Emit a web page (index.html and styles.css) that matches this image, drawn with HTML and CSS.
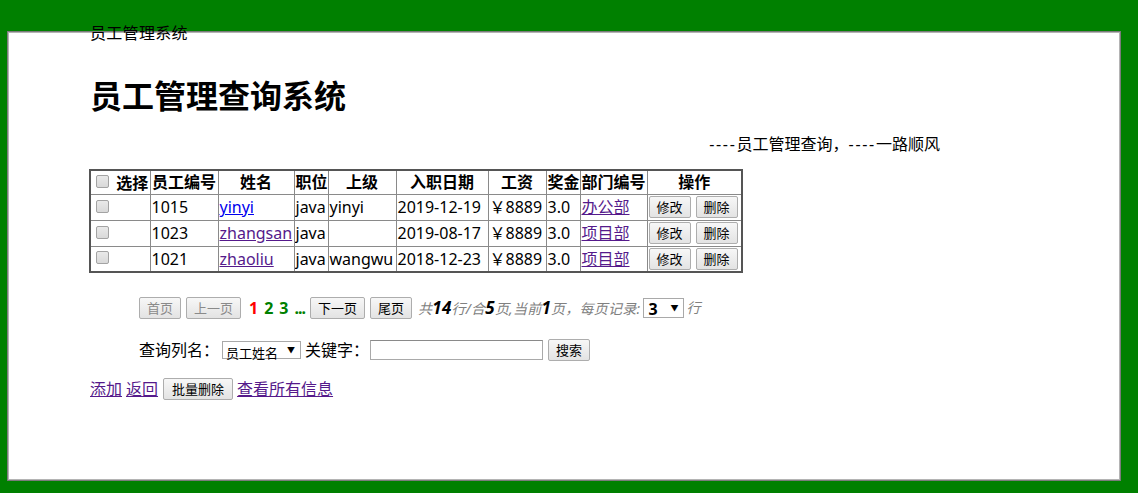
FILE: index.html
```html
<!DOCTYPE html>
<html lang="zh">
<head>
<meta charset="utf-8">
<title>员工管理系统</title>
<link rel="stylesheet" href="styles.css">
</head>
<body>
<div class="frame">
  <div class="frame-label">员工管理系统</div>
  <div class="content">
    <h1 class="title">员工管理查询系统</h1>
    <div class="subtitle"><span class="dash">----</span>员工管理查询，<span class="dash">----</span>一路顺风</div>
    <table class="grid">
      <colgroup>
        <col class="w60"><col class="w68"><col class="w76"><col class="w34"><col class="w68">
        <col class="w92"><col class="w58"><col class="w34"><col class="w67"><col class="w95">
      </colgroup>
      <thead>
        <tr>
          <th><input type="checkbox" class="cb"> 选择</th>
          <th>员工编号</th>
          <th>姓名</th>
          <th>职位</th>
          <th>上级</th>
          <th>入职日期</th>
          <th>工资</th>
          <th>奖金</th>
          <th>部门编号</th>
          <th>操作</th>
        </tr>
      </thead>
      <tbody>
        <tr>
          <td><input type="checkbox" class="cb"></td>
          <td>1015</td>
          <td><a href="#" class="link-new">yinyi</a></td>
          <td>java</td>
          <td>yinyi</td>
          <td>2019-12-19</td>
          <td>￥8889</td>
          <td>3.0</td>
          <td><a href="#" class="link">办公部</a></td>
          <td><span class="ops"><button class="btn">修改</button><button class="btn">删除</button></span></td>
        </tr>
        <tr>
          <td><input type="checkbox" class="cb"></td>
          <td>1023</td>
          <td><a href="#" class="link">zhangsan</a></td>
          <td>java</td>
          <td></td>
          <td>2019-08-17</td>
          <td>￥8889</td>
          <td>3.0</td>
          <td><a href="#" class="link">项目部</a></td>
          <td><span class="ops"><button class="btn">修改</button><button class="btn">删除</button></span></td>
        </tr>
        <tr>
          <td><input type="checkbox" class="cb"></td>
          <td>1021</td>
          <td><a href="#" class="link">zhaoliu</a></td>
          <td>java</td>
          <td>wangwu</td>
          <td>2018-12-23</td>
          <td>￥8889</td>
          <td>3.0</td>
          <td><a href="#" class="link">项目部</a></td>
          <td><span class="ops"><button class="btn">修改</button><button class="btn">删除</button></span></td>
        </tr>
      </tbody>
    </table>

    <div class="pager">
      <button class="btn" disabled>首页</button>
      <button class="btn" disabled>上一页</button>
      <span class="pnum current">1</span>
      <span class="pnum">2</span>
      <span class="pnum">3</span>
      <span class="pnum dots">...</span>
      <button class="btn">下一页</button>
      <button class="btn">尾页</button>
      <span class="pinfo">共<b>14</b>行/合<b>5</b>页,当前<b>1</b>页，每页记录:</span>
      <span class="sel sel-size"><select><option>3</option><option>5</option><option>10</option></select></span>
      <span class="pinfo unit">行</span>
    </div>

    <div class="query">
      <span>查询列名：</span>
      <span class="sel sel-col"><select><option>员工姓名</option><option>员工编号</option></select></span>
      <span class="kw">关键字：</span>
      <input type="text" class="kw-input">
      <button class="btn">搜索</button>
    </div>

    <div class="actions">
      <a href="#" class="link">添加</a>
      <a href="#" class="link">返回</a>
      <button class="btn btn-wide">批量删除</button>
      <a href="#" class="link">查看所有信息</a>
    </div>
  </div>
</div>
</body>
</html>
```

FILE: styles.css
```css
* { box-sizing: border-box; }

html, body { height: 100%; }

body {
  margin: 0;
  padding: 31px 17px 12px 7px;
  background: #008000;
  font-family: "Noto Sans", "Noto Sans CJK SC", sans-serif;
  font-size: 16px;
  line-height: 20px;
  color: #000;
}

.frame {
  position: relative;
  height: 450px;
  background: #fff;
  border: 1px solid #7b7b7b;
  box-shadow: inset 0 0 0 1px #b4b4b4;
}

.frame-label {
  position: absolute;
  top: -9px;
  left: 82px;
  font-size: 16px;
  line-height: 20px;
  letter-spacing: 0.3px;
  white-space: nowrap;
}

.content {
  padding: 42px 0 0 81px;
  width: 932px;
}

.title {
  margin: 0 0 0 1px;
  font-size: 32px;
  line-height: 40px;
  font-weight: bold;
  font-family: "Noto Sans CJK SC", sans-serif;
}

.subtitle {
  margin-top: 20px;
  text-align: right;
  line-height: 20px;
}

.dash { letter-spacing: 1.7px; }

.grid {
  margin-top: 15px;
  border-collapse: collapse;
  table-layout: fixed;
  width: 652px;
  border: 2px solid #555;
  font-size: 16px;
  line-height: 20px;
}

.w60 { width: 60px; }
.w68 { width: 68px; }
.w76 { width: 76px; }
.w34 { width: 34px; }
.w92 { width: 92px; }
.w58 { width: 58px; }
.w67 { width: 67px; }
.w95 { width: 95px; }

.grid th, .grid td {
  border: 1px solid #8a8a8a;
  padding: 0 1px;
  white-space: nowrap;
  overflow: hidden;
  vertical-align: middle;
}

.grid th {
  height: 24px;
  font-weight: bold;
  text-align: center;
}

.grid td {
  height: 26px;
  text-align: left;
}

.cb {
  -webkit-appearance: none;
  appearance: none;
  width: 13px;
  height: 13px;
  margin: 3px 3px 3px 4px;
  vertical-align: -2px;
  border: 1px solid #a3a3a3;
  border-radius: 2px;
  background: linear-gradient(#e9e9e9, #d9d9d9);
}

.link { color: #551a8b; text-decoration: underline; }
.link-new { color: #0000ee; text-decoration: underline; }

.ops {
  display: flex;
  gap: 5px;
}

.btn {
  font-family: "Noto Sans CJK SC", sans-serif;
  font-size: 13px;
  line-height: 18px;
  height: 22px;
  padding: 1px 7px;
  margin: 0;
  border: 1px solid #adadad;
  border-radius: 2px;
  background: linear-gradient(#f7f7f7, #e3e3e3);
  color: #000;
}

.btn:disabled { color: #8a8a8a; }

.btn-wide { padding: 1px 8px; }

.pager {
  display: flex;
  align-items: center;
  margin-top: 23px;
  padding-left: 50px;
  height: 24px;
}

.pager .btn + .btn { margin-left: 5px; }

.pnum {
  font-weight: bold;
  font-size: 16px;
  color: #008000;
  margin-left: 6px;
}

.pnum.current { color: #ff0000; margin-left: 8px; }
.pnum.dots { margin-right: 5px; letter-spacing: -1px; }

.pinfo {
  font-style: italic;
  font-size: 14px;
  color: #808080;
  margin-left: 6px;
  letter-spacing: 0.25px;
  white-space: nowrap;
}

.pinfo b {
  font-size: 17px;
  color: #000;
}

.pinfo.unit { margin-left: 2px; }

.sel {
  position: relative;
  display: inline-block;
  border: 1px solid #a9a9a9;
  background: #fff;
}

.sel select {
  -webkit-appearance: none;
  appearance: none;
  border: 0;
  background: transparent;
  width: 100%;
  height: 100%;
  margin: 0;
  padding: 0 0 0 4px;
  color: #000;
  font-family: "Noto Sans", "Noto Sans CJK SC", sans-serif;
}

.sel::after {
  content: "▼";
  position: absolute;
  right: 5px;
  top: 50%;
  transform: translateY(-50%);
  font-size: 8px;
  line-height: 8px;
  color: #000;
  pointer-events: none;
}

.sel-size {
  width: 41px;
  height: 20px;
  margin-left: 3px;
}

.sel-size select {
  font-size: 16px;
  font-weight: bold;
  line-height: 18px;
}

.sel-col {
  width: 79px;
  height: 18px;
  margin-left: 3px;
}

.sel-col select {
  font-size: 13px;
  line-height: 16px;
  padding-left: 3px;
  font-family: "Noto Sans CJK SC", sans-serif;
}

.query {
  display: flex;
  align-items: center;
  margin-top: 20px;
  padding-left: 50px;
  height: 20px;
}

.kw { margin-left: 4px; }

.kw-input {
  width: 173px;
  height: 20px;
  margin: 0 0 0 1px;
  border: 1px solid #a9a9a9;
  border-top-color: #8a8a8a;
  padding: 0 2px;
}

.query .btn { margin-left: 5px; }

.actions {
  display: flex;
  align-items: center;
  margin-top: 18px;
  margin-left: 1px;
  height: 22px;
}

.actions > * + * { margin-left: 4px; }
.actions .btn { margin-left: 5px; }
```
